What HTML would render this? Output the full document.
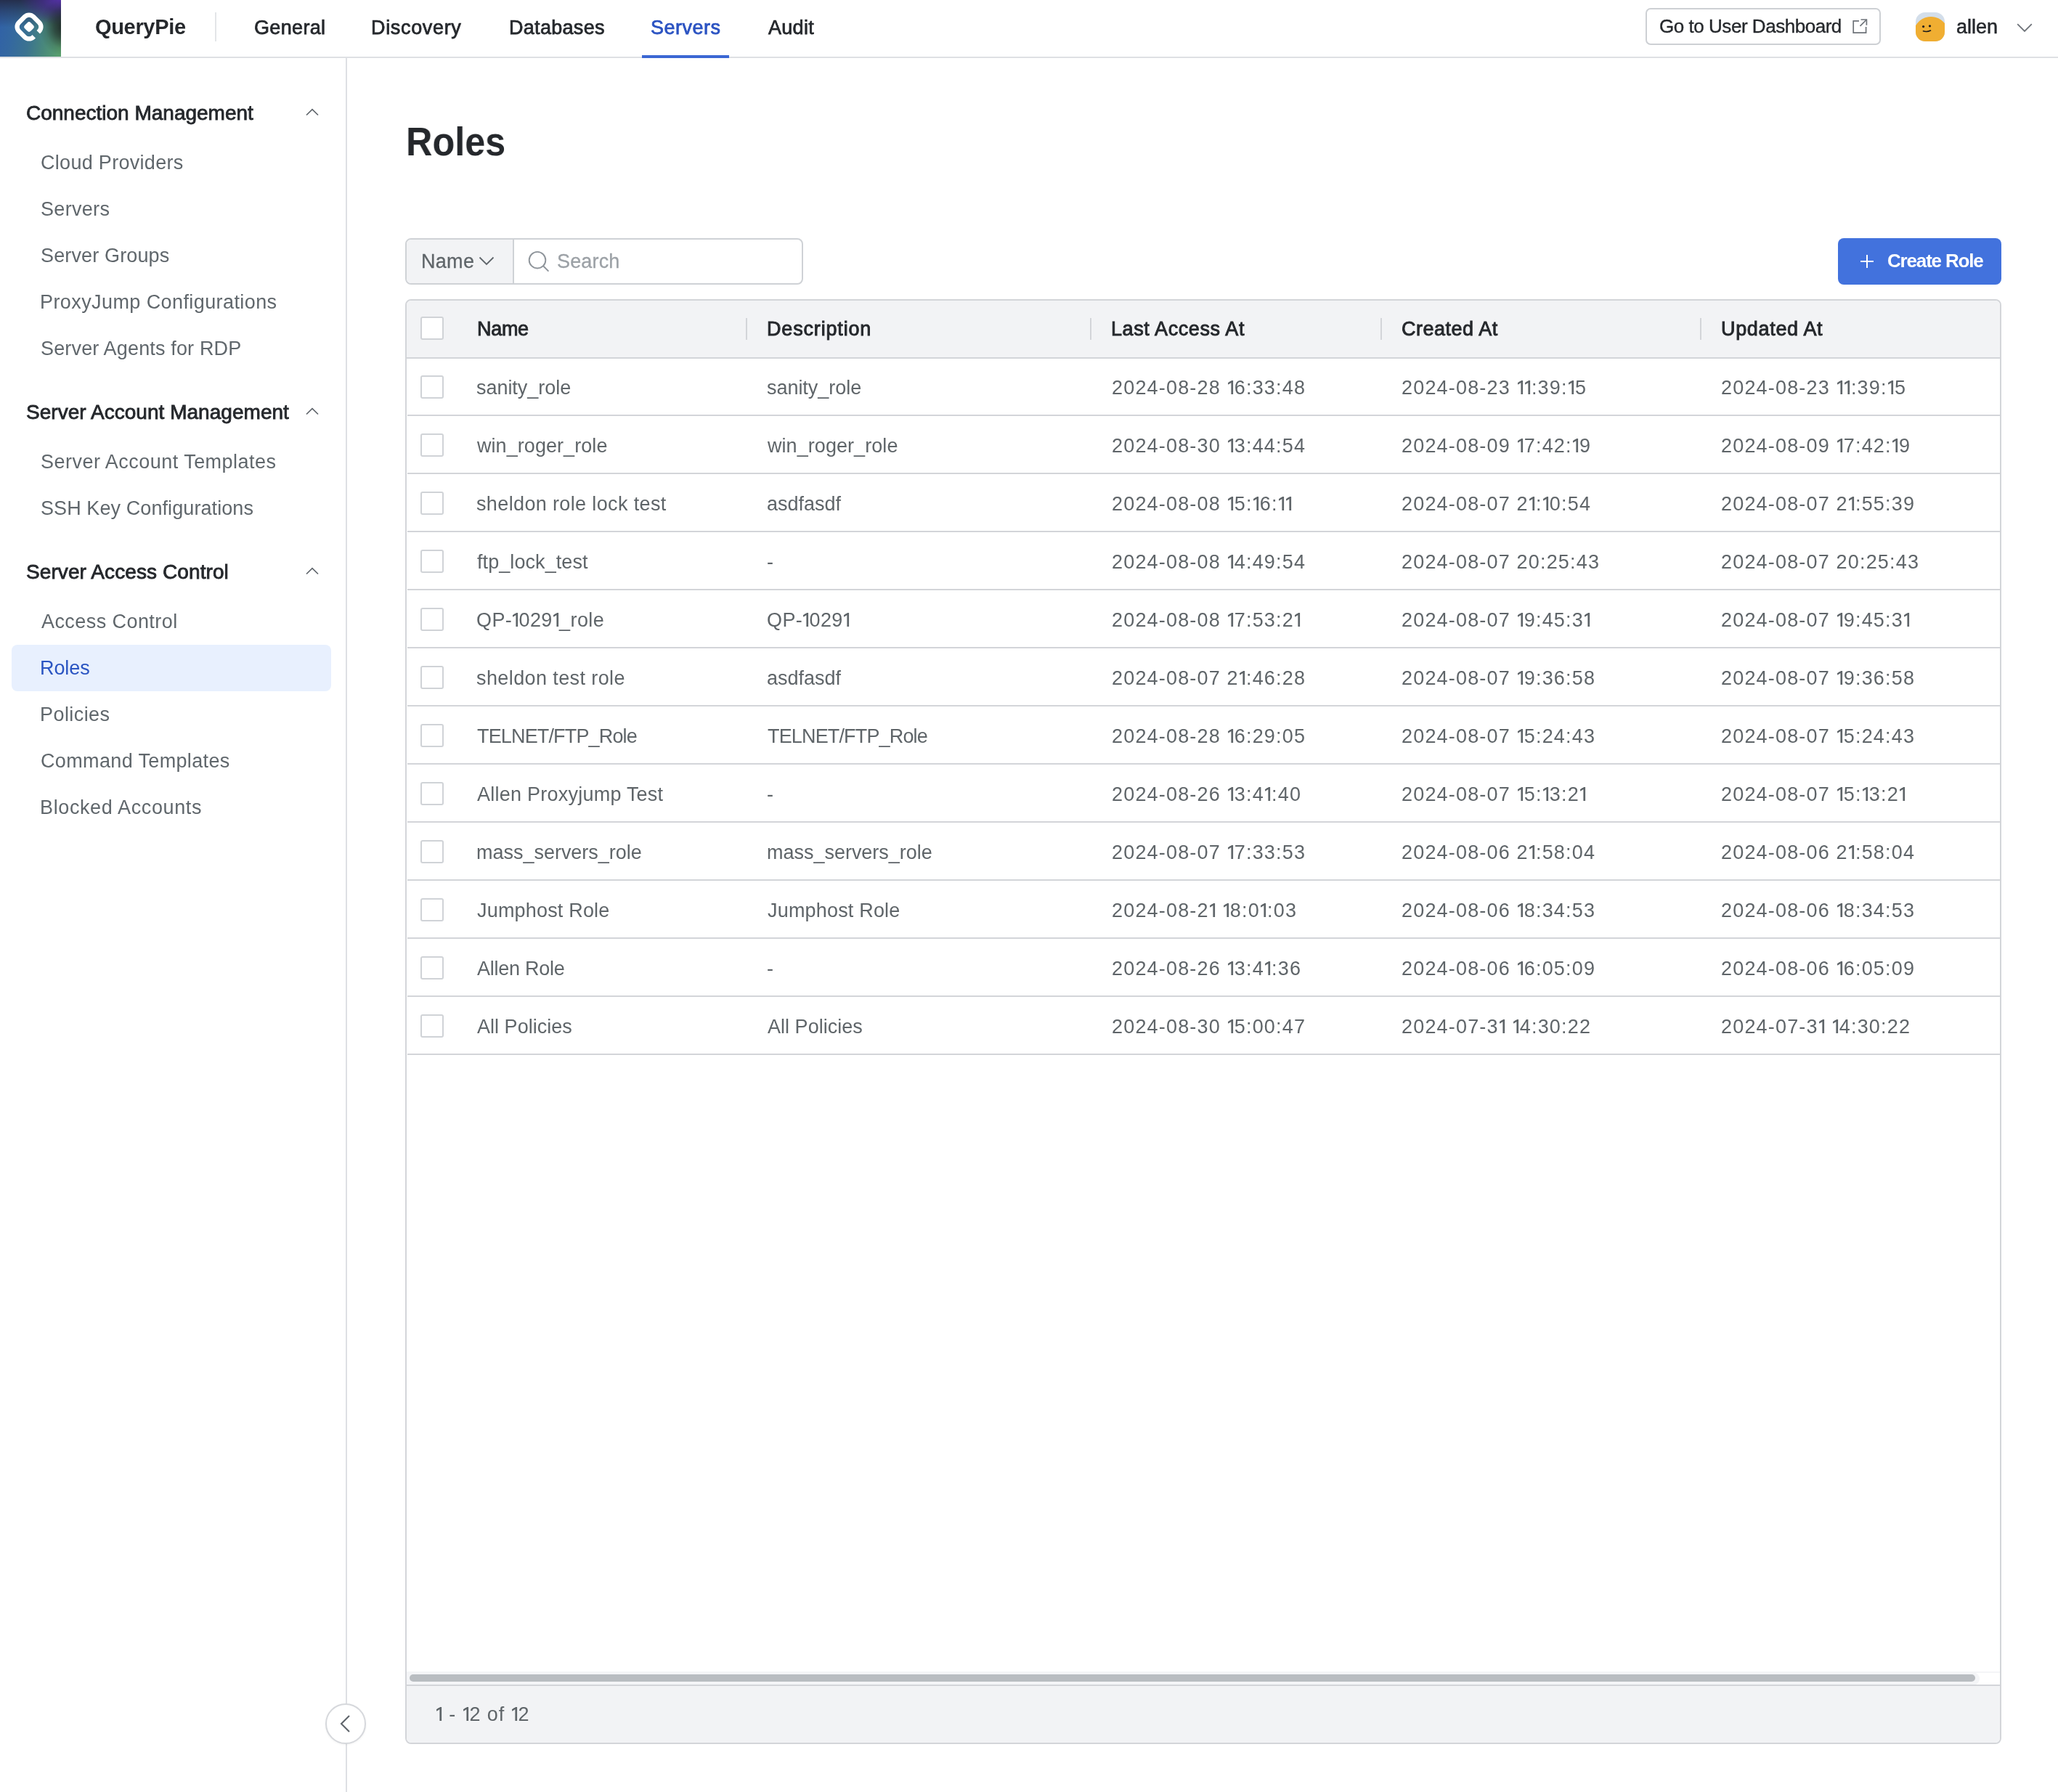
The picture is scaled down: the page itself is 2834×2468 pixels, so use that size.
<!DOCTYPE html><html><head><meta charset="utf-8"><title>Roles</title><style>
*{margin:0;padding:0}
html,body{width:2834px;height:2468px;overflow:hidden;background:#fff;font-family:"Liberation Sans",sans-serif;position:relative}
.t{position:absolute;line-height:1;white-space:nowrap;will-change:transform}
.box{position:absolute}
.dark{color:#25282C}
.gray{color:#5F6569}
.ph{color:#9CA1A6}
.white{color:#fff}
.nav{color:#25282C}
.nav.active{color:#2B53C2}
.side{color:#60676C}
.side.active{color:#2B55C2}
@media (max-width:1500px){html{zoom:0.5}}
.cb{width:32px;height:32px;border:2px solid #D0D3D7;border-radius:3px;box-sizing:border-box;background:#fff}
#hdr{position:absolute;left:0;top:0;width:2834px;height:78px;border-bottom:2px solid #DEE0E4;background:#fff}
#logo{position:absolute;left:0;top:0;width:84px;height:78px;overflow:hidden;
background:
 radial-gradient(ellipse 34px 40px at 88px 37px, rgba(26,30,34,0.95) 0%, rgba(26,30,34,0.6) 40%, rgba(26,30,34,0.15) 75%, rgba(26,30,34,0) 100%),
 radial-gradient(ellipse 56px 34px at 84px 0px, rgba(86,50,170,1) 0%, rgba(70,44,140,0.75) 45%, rgba(60,40,110,0) 100%),
 linear-gradient(180deg, rgba(36,44,72,0.95) 0%, rgba(36,44,72,0.5) 20%, rgba(36,44,72,0) 48%),
 linear-gradient(100deg, #3060A8 0%, #3468A0 25%, #3B7390 50%, #4A8A7A 75%, #5AA26C 100%);}
</style></head><body>
<div id="hdr"></div>
<div id="logo"><svg width="84" height="78" viewBox="0 0 84 78">
<defs><mask id="qm" maskUnits="userSpaceOnUse" x="0" y="0" width="84" height="78"><rect x="0" y="0" width="84" height="78" fill="#fff"/>
<path d="M41.5 33 L80 71.5 L74 77.5 L35.5 39 Z" fill="#000"/></mask></defs>
<g mask="url(#qm)"><rect x="25.9" y="22.9" width="28.2" height="28.2" rx="8.5" fill="none" stroke="#fff" stroke-width="6.3" transform="rotate(45 40 37)"/></g>
<rect x="34.3" y="31.3" width="11.4" height="11.4" rx="3.2" fill="#fff" transform="rotate(45 40 37)"/>
</svg></div>
<div class="t dark" style="left:131.40px;top:23px;font-size:29px;letter-spacing:-0.329px;font-weight:700;">QueryPie</div>
<div class="box" style="left:296px;top:17px;width:2px;height:40px;background:#E3E5E8"></div>
<div class="t nav" style="left:350.30px;top:25px;font-size:27px;letter-spacing:0.333px;-webkit-text-stroke:0.75px currentColor;">General</div>
<div class="t nav" style="left:511.20px;top:25px;font-size:27px;letter-spacing:0.662px;-webkit-text-stroke:0.75px currentColor;">Discovery</div>
<div class="t nav" style="left:701.00px;top:25px;font-size:27px;letter-spacing:0.3px;-webkit-text-stroke:0.75px currentColor;">Databases</div>
<div class="t nav active" style="left:895.50px;top:25px;font-size:27px;letter-spacing:0.483px;-webkit-text-stroke:0.75px currentColor;">Servers</div>
<div class="t nav" style="left:1057.60px;top:25px;font-size:27px;letter-spacing:0.3px;-webkit-text-stroke:0.75px currentColor;">Audit</div>
<div class="box" style="left:884px;top:76px;width:120px;height:4px;background:#3B67D3"></div>
<div class="box" style="left:2266px;top:11px;width:324px;height:51px;border:2px solid #CDD0D4;border-radius:7px;box-sizing:border-box;background:#fff"></div>
<div class="t dark" style="left:2284.60px;top:23px;font-size:26px;letter-spacing:-0.463px;-webkit-text-stroke:0.35px currentColor;">Go to User Dashboard</div>
<svg class="box" style="left:2551px;top:26px" width="21" height="21" viewBox="0 0 21 21" fill="none" stroke="#6E7379" stroke-width="1.7"><path d="M9 2.8H1.2V19.2H18.6V11"/><path d="M11.5 1H19.4V8.8"/><path d="M19.4 1L10.5 9.9"/></svg>
<svg class="box" style="left:2638px;top:17px" width="40" height="40" viewBox="0 0 40 40">
<defs><clipPath id="av"><rect x="0" y="0" width="40" height="40" rx="13"/></clipPath></defs>
<g clip-path="url(#av)"><rect width="40" height="40" fill="#D3DEEA"/>
<ellipse cx="21" cy="30" rx="24" ry="24" fill="#F0AE32" transform="rotate(-8 21 30)"/>
<circle cx="10.6" cy="19.6" r="1.6" fill="#1b1b1b"/><circle cx="19.5" cy="18.8" r="1.6" fill="#1b1b1b"/>
<path d="M10.5 25.8 Q15.5 27.6 20.5 25" stroke="#1b1b1b" stroke-width="1.6" fill="none" stroke-linecap="round"/></g></svg>
<div class="t dark" style="left:2694.00px;top:24px;font-size:27px;letter-spacing:0.0px;-webkit-text-stroke:0.5px currentColor;">allen</div>
<svg class="box" style="left:2777px;top:32px" width="22" height="13" viewBox="0 0 22 13" fill="none" stroke="#6E7379" stroke-width="1.8"><path d="M1.2 1.2L11 11L20.8 1.2"/></svg>
<div class="box" style="left:476px;top:80px;width:2px;height:2388px;background:#DEE0E4"></div>
<div class="t dark" style="left:36.20px;top:142px;font-size:28px;letter-spacing:0.0px;-webkit-text-stroke:0.85px currentColor;">Connection Management</div>
<svg class="box" style="left:420px;top:148px" width="20" height="12" viewBox="0 0 20 12" fill="none" stroke="#60666C" stroke-width="1.7"><path d="M2 10.5L10 2.6L18 10.5"/></svg>
<div class="t side" style="left:55.80px;top:211px;font-size:27px;letter-spacing:0.3px;">Cloud Providers</div>
<div class="t side" style="left:55.80px;top:275px;font-size:27px;letter-spacing:0.317px;">Servers</div>
<div class="t side" style="left:55.80px;top:339px;font-size:27px;letter-spacing:0.142px;">Server Groups</div>
<div class="t side" style="left:54.80px;top:403px;font-size:27px;letter-spacing:0.409px;">ProxyJump Configurations</div>
<div class="t side" style="left:55.80px;top:467px;font-size:27px;letter-spacing:0.155px;">Server Agents for RDP</div>
<div class="t dark" style="left:36.20px;top:554px;font-size:28px;letter-spacing:0.033px;-webkit-text-stroke:0.85px currentColor;">Server Account Management</div>
<svg class="box" style="left:420px;top:560px" width="20" height="12" viewBox="0 0 20 12" fill="none" stroke="#60666C" stroke-width="1.7"><path d="M2 10.5L10 2.6L18 10.5"/></svg>
<div class="t side" style="left:55.80px;top:623px;font-size:27px;letter-spacing:0.47px;">Server Account Templates</div>
<div class="t side" style="left:55.80px;top:687px;font-size:27px;letter-spacing:0.086px;">SSH Key Configurations</div>
<div class="t dark" style="left:36.20px;top:774px;font-size:28px;letter-spacing:0.09px;-webkit-text-stroke:0.85px currentColor;">Server Access Control</div>
<svg class="box" style="left:420px;top:780px" width="20" height="12" viewBox="0 0 20 12" fill="none" stroke="#60666C" stroke-width="1.7"><path d="M2 10.5L10 2.6L18 10.5"/></svg>
<div class="t side" style="left:56.80px;top:843px;font-size:27px;letter-spacing:0.431px;">Access Control</div>
<div class="box" style="left:16px;top:888px;width:440px;height:64px;border-radius:8px;background:#E8F0FE"></div>
<div class="t side active" style="left:54.80px;top:907px;font-size:27px;letter-spacing:-0.075px;">Roles</div>
<div class="t side" style="left:54.80px;top:971px;font-size:27px;letter-spacing:0.429px;">Policies</div>
<div class="t side" style="left:55.80px;top:1035px;font-size:27px;letter-spacing:0.356px;">Command Templates</div>
<div class="t side" style="left:54.80px;top:1099px;font-size:27px;letter-spacing:0.62px;">Blocked Accounts</div>
<div class="box" style="left:448px;top:2346px;width:56px;height:56px;border-radius:50%;border:2px solid #D6D8DC;box-sizing:border-box;background:#fff;box-shadow:0 1px 3px rgba(0,0,0,0.06)"></div>
<svg class="box" style="left:466px;top:2361px" width="18" height="26" viewBox="0 0 18 26" fill="none" stroke="#5F656B" stroke-width="2.1"><path d="M15 2L4 13L15 24"/></svg>
<div class="t dark" style="left:559.00px;top:167px;font-size:56px;letter-spacing:0px;font-weight:700;transform:scaleX(0.9);transform-origin:0 0;">Roles</div>
<div class="box" style="left:558px;top:328px;width:548px;height:64px;border:2px solid #CFD2D6;border-radius:8px;box-sizing:border-box;background:#fff;overflow:hidden"><div style="position:absolute;left:0;top:0;width:146px;height:60px;background:#F2F3F5;border-right:2px solid #CFD2D6"></div></div>
<div class="t gray" style="left:579.70px;top:347px;font-size:27px;letter-spacing:0.3px;-webkit-text-stroke:0.3px currentColor;">Name</div>
<svg class="box" style="left:659px;top:352px" width="22" height="14" viewBox="0 0 22 14" fill="none" stroke="#5F656B" stroke-width="1.8"><path d="M1.5 2.5L11 12L20.5 2.5"/></svg>
<svg class="box" style="left:727px;top:345px" width="31" height="31" viewBox="0 0 31 31" fill="none" stroke="#8E949A" stroke-width="1.9"><circle cx="13" cy="13.2" r="11.3"/><path d="M20.8 21L28.4 28.6"/></svg>
<div class="t ph" style="left:766.60px;top:347px;font-size:27px;letter-spacing:0.15px;-webkit-text-stroke:0.3px currentColor;">Search</div>
<div class="box" style="left:2531px;top:328px;width:225px;height:64px;border-radius:8px;background:#4272DD"></div>
<svg class="box" style="left:2561px;top:350px" width="20" height="20" viewBox="0 0 20 20" fill="none" stroke="#fff" stroke-width="2"><path d="M10 1V19M1 10H19"/></svg>
<div class="t white" style="left:2598.90px;top:346px;font-size:26px;letter-spacing:-1.17px;font-weight:700;">Create Role</div>
<div class="box" style="left:558px;top:412px;width:2198px;height:1990px;border:2px solid #D3D5D9;border-radius:8px;box-sizing:border-box;background:#fff;overflow:hidden">
<div style="position:absolute;left:0;top:0;width:100%;height:78px;background:#F2F3F5;border-bottom:2px solid #D3D5D9"></div>
<div style="position:absolute;left:0;top:1888px;width:100%;height:2px;background:#F4F5F7"></div>
<div style="position:absolute;left:0;top:1889px;width:2166px;height:18px;border-radius:0 9px 9px 0;background:#F4F5F7"></div>
<div style="position:absolute;left:4px;top:1892px;width:2156px;height:10px;border-radius:5px;background:#B9BDC1"></div>
<div style="position:absolute;left:0;top:1906px;width:100%;height:80px;background:#F2F3F5;border-top:2px solid #D3D5D9"></div>
</div>
<div class="box" style="left:1027px;top:438px;width:2px;height:30px;background:#D3D5D9"></div>
<div class="box" style="left:1501px;top:438px;width:2px;height:30px;background:#D3D5D9"></div>
<div class="box" style="left:1901px;top:438px;width:2px;height:30px;background:#D3D5D9"></div>
<div class="box" style="left:2341px;top:438px;width:2px;height:30px;background:#D3D5D9"></div>
<div class="box cb" style="left:579px;top:436px"></div>
<div class="t dark" style="left:656.80px;top:440px;font-size:27px;letter-spacing:-0.3px;-webkit-text-stroke:0.9px currentColor;">Name</div>
<div class="t dark" style="left:1056.00px;top:440px;font-size:27px;letter-spacing:0.83px;-webkit-text-stroke:0.9px currentColor;">Description</div>
<div class="t dark" style="left:1530.00px;top:440px;font-size:27px;letter-spacing:0.6px;-webkit-text-stroke:0.9px currentColor;">Last Access At</div>
<div class="t dark" style="left:1929.50px;top:440px;font-size:27px;letter-spacing:0.511px;-webkit-text-stroke:0.9px currentColor;">Created At</div>
<div class="t dark" style="left:2369.50px;top:440px;font-size:27px;letter-spacing:0.667px;-webkit-text-stroke:0.9px currentColor;">Updated At</div>
<div class="box" style="left:561px;top:571px;width:2193px;height:2px;background:#D3D5D9"></div>
<div class="box cb" style="left:579px;top:517px"></div>
<div class="t gray" style="left:656.00px;top:521px;font-size:27px;letter-spacing:-0.04px;">sanity_role</div>
<div class="t gray" style="left:1056.00px;top:521px;font-size:27px;letter-spacing:-0.04px;">sanity_role</div>
<div class="t gray" style="left:1530.70px;top:521px;font-size:27px;letter-spacing:1.18px;">2024-08-28 <svg width="9" height="19" viewBox="0 0 9 19" style="vertical-align:baseline;margin-right:1.18px"><path d="M5.4 0H8.1V19H5.4Z M5.6 0L5.6 2.9L1.3 5.7L0.9 3.3Z" fill="currentColor"/></svg>6:33:48</div>
<div class="t gray" style="left:1929.50px;top:521px;font-size:27px;letter-spacing:1.18px;">2024-08-23 <svg width="9" height="19" viewBox="0 0 9 19" style="vertical-align:baseline;margin-right:1.18px"><path d="M5.4 0H8.1V19H5.4Z M5.6 0L5.6 2.9L1.3 5.7L0.9 3.3Z" fill="currentColor"/></svg><svg width="9" height="19" viewBox="0 0 9 19" style="vertical-align:baseline;margin-right:1.18px"><path d="M5.4 0H8.1V19H5.4Z M5.6 0L5.6 2.9L1.3 5.7L0.9 3.3Z" fill="currentColor"/></svg>:39:<svg width="9" height="19" viewBox="0 0 9 19" style="vertical-align:baseline;margin-right:1.18px"><path d="M5.4 0H8.1V19H5.4Z M5.6 0L5.6 2.9L1.3 5.7L0.9 3.3Z" fill="currentColor"/></svg>5</div>
<div class="t gray" style="left:2369.50px;top:521px;font-size:27px;letter-spacing:1.18px;">2024-08-23 <svg width="9" height="19" viewBox="0 0 9 19" style="vertical-align:baseline;margin-right:1.18px"><path d="M5.4 0H8.1V19H5.4Z M5.6 0L5.6 2.9L1.3 5.7L0.9 3.3Z" fill="currentColor"/></svg><svg width="9" height="19" viewBox="0 0 9 19" style="vertical-align:baseline;margin-right:1.18px"><path d="M5.4 0H8.1V19H5.4Z M5.6 0L5.6 2.9L1.3 5.7L0.9 3.3Z" fill="currentColor"/></svg>:39:<svg width="9" height="19" viewBox="0 0 9 19" style="vertical-align:baseline;margin-right:1.18px"><path d="M5.4 0H8.1V19H5.4Z M5.6 0L5.6 2.9L1.3 5.7L0.9 3.3Z" fill="currentColor"/></svg>5</div>
<div class="box" style="left:561px;top:651px;width:2193px;height:2px;background:#D3D5D9"></div>
<div class="box cb" style="left:579px;top:597px"></div>
<div class="t gray" style="left:657.00px;top:601px;font-size:27px;letter-spacing:0.062px;">win_roger_role</div>
<div class="t gray" style="left:1057.00px;top:601px;font-size:27px;letter-spacing:0.062px;">win_roger_role</div>
<div class="t gray" style="left:1530.70px;top:601px;font-size:27px;letter-spacing:1.18px;">2024-08-30 <svg width="9" height="19" viewBox="0 0 9 19" style="vertical-align:baseline;margin-right:1.18px"><path d="M5.4 0H8.1V19H5.4Z M5.6 0L5.6 2.9L1.3 5.7L0.9 3.3Z" fill="currentColor"/></svg>3:44:54</div>
<div class="t gray" style="left:1929.50px;top:601px;font-size:27px;letter-spacing:1.18px;">2024-08-09 <svg width="9" height="19" viewBox="0 0 9 19" style="vertical-align:baseline;margin-right:1.18px"><path d="M5.4 0H8.1V19H5.4Z M5.6 0L5.6 2.9L1.3 5.7L0.9 3.3Z" fill="currentColor"/></svg>7:42:<svg width="9" height="19" viewBox="0 0 9 19" style="vertical-align:baseline;margin-right:1.18px"><path d="M5.4 0H8.1V19H5.4Z M5.6 0L5.6 2.9L1.3 5.7L0.9 3.3Z" fill="currentColor"/></svg>9</div>
<div class="t gray" style="left:2369.50px;top:601px;font-size:27px;letter-spacing:1.18px;">2024-08-09 <svg width="9" height="19" viewBox="0 0 9 19" style="vertical-align:baseline;margin-right:1.18px"><path d="M5.4 0H8.1V19H5.4Z M5.6 0L5.6 2.9L1.3 5.7L0.9 3.3Z" fill="currentColor"/></svg>7:42:<svg width="9" height="19" viewBox="0 0 9 19" style="vertical-align:baseline;margin-right:1.18px"><path d="M5.4 0H8.1V19H5.4Z M5.6 0L5.6 2.9L1.3 5.7L0.9 3.3Z" fill="currentColor"/></svg>9</div>
<div class="box" style="left:561px;top:731px;width:2193px;height:2px;background:#D3D5D9"></div>
<div class="box cb" style="left:579px;top:677px"></div>
<div class="t gray" style="left:656.00px;top:681px;font-size:27px;letter-spacing:0.367px;">sheldon role lock test</div>
<div class="t gray" style="left:1056.00px;top:681px;font-size:27px;letter-spacing:0px;">asdfasdf</div>
<div class="t gray" style="left:1530.70px;top:681px;font-size:27px;letter-spacing:1.18px;">2024-08-08 <svg width="9" height="19" viewBox="0 0 9 19" style="vertical-align:baseline;margin-right:1.18px"><path d="M5.4 0H8.1V19H5.4Z M5.6 0L5.6 2.9L1.3 5.7L0.9 3.3Z" fill="currentColor"/></svg>5:<svg width="9" height="19" viewBox="0 0 9 19" style="vertical-align:baseline;margin-right:1.18px"><path d="M5.4 0H8.1V19H5.4Z M5.6 0L5.6 2.9L1.3 5.7L0.9 3.3Z" fill="currentColor"/></svg>6:<svg width="9" height="19" viewBox="0 0 9 19" style="vertical-align:baseline;margin-right:1.18px"><path d="M5.4 0H8.1V19H5.4Z M5.6 0L5.6 2.9L1.3 5.7L0.9 3.3Z" fill="currentColor"/></svg><svg width="9" height="19" viewBox="0 0 9 19" style="vertical-align:baseline;margin-right:1.18px"><path d="M5.4 0H8.1V19H5.4Z M5.6 0L5.6 2.9L1.3 5.7L0.9 3.3Z" fill="currentColor"/></svg></div>
<div class="t gray" style="left:1929.50px;top:681px;font-size:27px;letter-spacing:1.18px;">2024-08-07 2<svg width="9" height="19" viewBox="0 0 9 19" style="vertical-align:baseline;margin-right:1.18px"><path d="M5.4 0H8.1V19H5.4Z M5.6 0L5.6 2.9L1.3 5.7L0.9 3.3Z" fill="currentColor"/></svg>:<svg width="9" height="19" viewBox="0 0 9 19" style="vertical-align:baseline;margin-right:1.18px"><path d="M5.4 0H8.1V19H5.4Z M5.6 0L5.6 2.9L1.3 5.7L0.9 3.3Z" fill="currentColor"/></svg>0:54</div>
<div class="t gray" style="left:2369.50px;top:681px;font-size:27px;letter-spacing:1.18px;">2024-08-07 2<svg width="9" height="19" viewBox="0 0 9 19" style="vertical-align:baseline;margin-right:1.18px"><path d="M5.4 0H8.1V19H5.4Z M5.6 0L5.6 2.9L1.3 5.7L0.9 3.3Z" fill="currentColor"/></svg>:55:39</div>
<div class="box" style="left:561px;top:811px;width:2193px;height:2px;background:#D3D5D9"></div>
<div class="box cb" style="left:579px;top:757px"></div>
<div class="t gray" style="left:657.00px;top:761px;font-size:27px;letter-spacing:0.075px;">ftp_lock_test</div>
<div class="t gray" style="left:1056.00px;top:761px;font-size:27px;letter-spacing:0px;">-</div>
<div class="t gray" style="left:1530.70px;top:761px;font-size:27px;letter-spacing:1.18px;">2024-08-08 <svg width="9" height="19" viewBox="0 0 9 19" style="vertical-align:baseline;margin-right:1.18px"><path d="M5.4 0H8.1V19H5.4Z M5.6 0L5.6 2.9L1.3 5.7L0.9 3.3Z" fill="currentColor"/></svg>4:49:54</div>
<div class="t gray" style="left:1929.50px;top:761px;font-size:27px;letter-spacing:1.18px;">2024-08-07 20:25:43</div>
<div class="t gray" style="left:2369.50px;top:761px;font-size:27px;letter-spacing:1.18px;">2024-08-07 20:25:43</div>
<div class="box" style="left:561px;top:891px;width:2193px;height:2px;background:#D3D5D9"></div>
<div class="box cb" style="left:579px;top:837px"></div>
<div class="t gray" style="left:656.00px;top:841px;font-size:27px;letter-spacing:0.38px;">QP-<svg width="9" height="19" viewBox="0 0 9 19" style="vertical-align:baseline;margin-right:0.38px"><path d="M5.4 0H8.1V19H5.4Z M5.6 0L5.6 2.9L1.3 5.7L0.9 3.3Z" fill="currentColor"/></svg>029<svg width="9" height="19" viewBox="0 0 9 19" style="vertical-align:baseline;margin-right:0.38px"><path d="M5.4 0H8.1V19H5.4Z M5.6 0L5.6 2.9L1.3 5.7L0.9 3.3Z" fill="currentColor"/></svg>_role</div>
<div class="t gray" style="left:1056.00px;top:841px;font-size:27px;letter-spacing:0.38px;">QP-<svg width="9" height="19" viewBox="0 0 9 19" style="vertical-align:baseline;margin-right:0.38px"><path d="M5.4 0H8.1V19H5.4Z M5.6 0L5.6 2.9L1.3 5.7L0.9 3.3Z" fill="currentColor"/></svg>029<svg width="9" height="19" viewBox="0 0 9 19" style="vertical-align:baseline;margin-right:0.38px"><path d="M5.4 0H8.1V19H5.4Z M5.6 0L5.6 2.9L1.3 5.7L0.9 3.3Z" fill="currentColor"/></svg></div>
<div class="t gray" style="left:1530.70px;top:841px;font-size:27px;letter-spacing:1.18px;">2024-08-08 <svg width="9" height="19" viewBox="0 0 9 19" style="vertical-align:baseline;margin-right:1.18px"><path d="M5.4 0H8.1V19H5.4Z M5.6 0L5.6 2.9L1.3 5.7L0.9 3.3Z" fill="currentColor"/></svg>7:53:2<svg width="9" height="19" viewBox="0 0 9 19" style="vertical-align:baseline;margin-right:1.18px"><path d="M5.4 0H8.1V19H5.4Z M5.6 0L5.6 2.9L1.3 5.7L0.9 3.3Z" fill="currentColor"/></svg></div>
<div class="t gray" style="left:1929.50px;top:841px;font-size:27px;letter-spacing:1.18px;">2024-08-07 <svg width="9" height="19" viewBox="0 0 9 19" style="vertical-align:baseline;margin-right:1.18px"><path d="M5.4 0H8.1V19H5.4Z M5.6 0L5.6 2.9L1.3 5.7L0.9 3.3Z" fill="currentColor"/></svg>9:45:3<svg width="9" height="19" viewBox="0 0 9 19" style="vertical-align:baseline;margin-right:1.18px"><path d="M5.4 0H8.1V19H5.4Z M5.6 0L5.6 2.9L1.3 5.7L0.9 3.3Z" fill="currentColor"/></svg></div>
<div class="t gray" style="left:2369.50px;top:841px;font-size:27px;letter-spacing:1.18px;">2024-08-07 <svg width="9" height="19" viewBox="0 0 9 19" style="vertical-align:baseline;margin-right:1.18px"><path d="M5.4 0H8.1V19H5.4Z M5.6 0L5.6 2.9L1.3 5.7L0.9 3.3Z" fill="currentColor"/></svg>9:45:3<svg width="9" height="19" viewBox="0 0 9 19" style="vertical-align:baseline;margin-right:1.18px"><path d="M5.4 0H8.1V19H5.4Z M5.6 0L5.6 2.9L1.3 5.7L0.9 3.3Z" fill="currentColor"/></svg></div>
<div class="box" style="left:561px;top:971px;width:2193px;height:2px;background:#D3D5D9"></div>
<div class="box cb" style="left:579px;top:917px"></div>
<div class="t gray" style="left:656.00px;top:921px;font-size:27px;letter-spacing:0.4px;">sheldon test role</div>
<div class="t gray" style="left:1056.00px;top:921px;font-size:27px;letter-spacing:0px;">asdfasdf</div>
<div class="t gray" style="left:1530.70px;top:921px;font-size:27px;letter-spacing:1.18px;">2024-08-07 2<svg width="9" height="19" viewBox="0 0 9 19" style="vertical-align:baseline;margin-right:1.18px"><path d="M5.4 0H8.1V19H5.4Z M5.6 0L5.6 2.9L1.3 5.7L0.9 3.3Z" fill="currentColor"/></svg>:46:28</div>
<div class="t gray" style="left:1929.50px;top:921px;font-size:27px;letter-spacing:1.18px;">2024-08-07 <svg width="9" height="19" viewBox="0 0 9 19" style="vertical-align:baseline;margin-right:1.18px"><path d="M5.4 0H8.1V19H5.4Z M5.6 0L5.6 2.9L1.3 5.7L0.9 3.3Z" fill="currentColor"/></svg>9:36:58</div>
<div class="t gray" style="left:2369.50px;top:921px;font-size:27px;letter-spacing:1.18px;">2024-08-07 <svg width="9" height="19" viewBox="0 0 9 19" style="vertical-align:baseline;margin-right:1.18px"><path d="M5.4 0H8.1V19H5.4Z M5.6 0L5.6 2.9L1.3 5.7L0.9 3.3Z" fill="currentColor"/></svg>9:36:58</div>
<div class="box" style="left:561px;top:1051px;width:2193px;height:2px;background:#D3D5D9"></div>
<div class="box cb" style="left:579px;top:997px"></div>
<div class="t gray" style="left:657.00px;top:1001px;font-size:27px;letter-spacing:-0.843px;">TELNET/FTP_Role</div>
<div class="t gray" style="left:1057.00px;top:1001px;font-size:27px;letter-spacing:-0.843px;">TELNET/FTP_Role</div>
<div class="t gray" style="left:1530.70px;top:1001px;font-size:27px;letter-spacing:1.18px;">2024-08-28 <svg width="9" height="19" viewBox="0 0 9 19" style="vertical-align:baseline;margin-right:1.18px"><path d="M5.4 0H8.1V19H5.4Z M5.6 0L5.6 2.9L1.3 5.7L0.9 3.3Z" fill="currentColor"/></svg>6:29:05</div>
<div class="t gray" style="left:1929.50px;top:1001px;font-size:27px;letter-spacing:1.18px;">2024-08-07 <svg width="9" height="19" viewBox="0 0 9 19" style="vertical-align:baseline;margin-right:1.18px"><path d="M5.4 0H8.1V19H5.4Z M5.6 0L5.6 2.9L1.3 5.7L0.9 3.3Z" fill="currentColor"/></svg>5:24:43</div>
<div class="t gray" style="left:2369.50px;top:1001px;font-size:27px;letter-spacing:1.18px;">2024-08-07 <svg width="9" height="19" viewBox="0 0 9 19" style="vertical-align:baseline;margin-right:1.18px"><path d="M5.4 0H8.1V19H5.4Z M5.6 0L5.6 2.9L1.3 5.7L0.9 3.3Z" fill="currentColor"/></svg>5:24:43</div>
<div class="box" style="left:561px;top:1131px;width:2193px;height:2px;background:#D3D5D9"></div>
<div class="box cb" style="left:579px;top:1077px"></div>
<div class="t gray" style="left:657.00px;top:1081px;font-size:27px;letter-spacing:0.237px;">Allen Proxyjump Test</div>
<div class="t gray" style="left:1056.00px;top:1081px;font-size:27px;letter-spacing:0px;">-</div>
<div class="t gray" style="left:1530.70px;top:1081px;font-size:27px;letter-spacing:1.18px;">2024-08-26 <svg width="9" height="19" viewBox="0 0 9 19" style="vertical-align:baseline;margin-right:1.18px"><path d="M5.4 0H8.1V19H5.4Z M5.6 0L5.6 2.9L1.3 5.7L0.9 3.3Z" fill="currentColor"/></svg>3:4<svg width="9" height="19" viewBox="0 0 9 19" style="vertical-align:baseline;margin-right:1.18px"><path d="M5.4 0H8.1V19H5.4Z M5.6 0L5.6 2.9L1.3 5.7L0.9 3.3Z" fill="currentColor"/></svg>:40</div>
<div class="t gray" style="left:1929.50px;top:1081px;font-size:27px;letter-spacing:1.18px;">2024-08-07 <svg width="9" height="19" viewBox="0 0 9 19" style="vertical-align:baseline;margin-right:1.18px"><path d="M5.4 0H8.1V19H5.4Z M5.6 0L5.6 2.9L1.3 5.7L0.9 3.3Z" fill="currentColor"/></svg>5:<svg width="9" height="19" viewBox="0 0 9 19" style="vertical-align:baseline;margin-right:1.18px"><path d="M5.4 0H8.1V19H5.4Z M5.6 0L5.6 2.9L1.3 5.7L0.9 3.3Z" fill="currentColor"/></svg>3:2<svg width="9" height="19" viewBox="0 0 9 19" style="vertical-align:baseline;margin-right:1.18px"><path d="M5.4 0H8.1V19H5.4Z M5.6 0L5.6 2.9L1.3 5.7L0.9 3.3Z" fill="currentColor"/></svg></div>
<div class="t gray" style="left:2369.50px;top:1081px;font-size:27px;letter-spacing:1.18px;">2024-08-07 <svg width="9" height="19" viewBox="0 0 9 19" style="vertical-align:baseline;margin-right:1.18px"><path d="M5.4 0H8.1V19H5.4Z M5.6 0L5.6 2.9L1.3 5.7L0.9 3.3Z" fill="currentColor"/></svg>5:<svg width="9" height="19" viewBox="0 0 9 19" style="vertical-align:baseline;margin-right:1.18px"><path d="M5.4 0H8.1V19H5.4Z M5.6 0L5.6 2.9L1.3 5.7L0.9 3.3Z" fill="currentColor"/></svg>3:2<svg width="9" height="19" viewBox="0 0 9 19" style="vertical-align:baseline;margin-right:1.18px"><path d="M5.4 0H8.1V19H5.4Z M5.6 0L5.6 2.9L1.3 5.7L0.9 3.3Z" fill="currentColor"/></svg></div>
<div class="box" style="left:561px;top:1211px;width:2193px;height:2px;background:#D3D5D9"></div>
<div class="box cb" style="left:579px;top:1157px"></div>
<div class="t gray" style="left:656.00px;top:1161px;font-size:27px;letter-spacing:-0.019px;">mass_servers_role</div>
<div class="t gray" style="left:1056.00px;top:1161px;font-size:27px;letter-spacing:-0.019px;">mass_servers_role</div>
<div class="t gray" style="left:1530.70px;top:1161px;font-size:27px;letter-spacing:1.18px;">2024-08-07 <svg width="9" height="19" viewBox="0 0 9 19" style="vertical-align:baseline;margin-right:1.18px"><path d="M5.4 0H8.1V19H5.4Z M5.6 0L5.6 2.9L1.3 5.7L0.9 3.3Z" fill="currentColor"/></svg>7:33:53</div>
<div class="t gray" style="left:1929.50px;top:1161px;font-size:27px;letter-spacing:1.18px;">2024-08-06 2<svg width="9" height="19" viewBox="0 0 9 19" style="vertical-align:baseline;margin-right:1.18px"><path d="M5.4 0H8.1V19H5.4Z M5.6 0L5.6 2.9L1.3 5.7L0.9 3.3Z" fill="currentColor"/></svg>:58:04</div>
<div class="t gray" style="left:2369.50px;top:1161px;font-size:27px;letter-spacing:1.18px;">2024-08-06 2<svg width="9" height="19" viewBox="0 0 9 19" style="vertical-align:baseline;margin-right:1.18px"><path d="M5.4 0H8.1V19H5.4Z M5.6 0L5.6 2.9L1.3 5.7L0.9 3.3Z" fill="currentColor"/></svg>:58:04</div>
<div class="box" style="left:561px;top:1291px;width:2193px;height:2px;background:#D3D5D9"></div>
<div class="box cb" style="left:579px;top:1237px"></div>
<div class="t gray" style="left:657.00px;top:1241px;font-size:27px;letter-spacing:0.183px;">Jumphost Role</div>
<div class="t gray" style="left:1057.00px;top:1241px;font-size:27px;letter-spacing:0.183px;">Jumphost Role</div>
<div class="t gray" style="left:1530.70px;top:1241px;font-size:27px;letter-spacing:1.18px;">2024-08-2<svg width="9" height="19" viewBox="0 0 9 19" style="vertical-align:baseline;margin-right:1.18px"><path d="M5.4 0H8.1V19H5.4Z M5.6 0L5.6 2.9L1.3 5.7L0.9 3.3Z" fill="currentColor"/></svg> <svg width="9" height="19" viewBox="0 0 9 19" style="vertical-align:baseline;margin-right:1.18px"><path d="M5.4 0H8.1V19H5.4Z M5.6 0L5.6 2.9L1.3 5.7L0.9 3.3Z" fill="currentColor"/></svg>8:0<svg width="9" height="19" viewBox="0 0 9 19" style="vertical-align:baseline;margin-right:1.18px"><path d="M5.4 0H8.1V19H5.4Z M5.6 0L5.6 2.9L1.3 5.7L0.9 3.3Z" fill="currentColor"/></svg>:03</div>
<div class="t gray" style="left:1929.50px;top:1241px;font-size:27px;letter-spacing:1.18px;">2024-08-06 <svg width="9" height="19" viewBox="0 0 9 19" style="vertical-align:baseline;margin-right:1.18px"><path d="M5.4 0H8.1V19H5.4Z M5.6 0L5.6 2.9L1.3 5.7L0.9 3.3Z" fill="currentColor"/></svg>8:34:53</div>
<div class="t gray" style="left:2369.50px;top:1241px;font-size:27px;letter-spacing:1.18px;">2024-08-06 <svg width="9" height="19" viewBox="0 0 9 19" style="vertical-align:baseline;margin-right:1.18px"><path d="M5.4 0H8.1V19H5.4Z M5.6 0L5.6 2.9L1.3 5.7L0.9 3.3Z" fill="currentColor"/></svg>8:34:53</div>
<div class="box" style="left:561px;top:1371px;width:2193px;height:2px;background:#D3D5D9"></div>
<div class="box cb" style="left:579px;top:1317px"></div>
<div class="t gray" style="left:657.00px;top:1321px;font-size:27px;letter-spacing:-0.256px;">Allen Role</div>
<div class="t gray" style="left:1056.00px;top:1321px;font-size:27px;letter-spacing:0px;">-</div>
<div class="t gray" style="left:1530.70px;top:1321px;font-size:27px;letter-spacing:1.18px;">2024-08-26 <svg width="9" height="19" viewBox="0 0 9 19" style="vertical-align:baseline;margin-right:1.18px"><path d="M5.4 0H8.1V19H5.4Z M5.6 0L5.6 2.9L1.3 5.7L0.9 3.3Z" fill="currentColor"/></svg>3:4<svg width="9" height="19" viewBox="0 0 9 19" style="vertical-align:baseline;margin-right:1.18px"><path d="M5.4 0H8.1V19H5.4Z M5.6 0L5.6 2.9L1.3 5.7L0.9 3.3Z" fill="currentColor"/></svg>:36</div>
<div class="t gray" style="left:1929.50px;top:1321px;font-size:27px;letter-spacing:1.18px;">2024-08-06 <svg width="9" height="19" viewBox="0 0 9 19" style="vertical-align:baseline;margin-right:1.18px"><path d="M5.4 0H8.1V19H5.4Z M5.6 0L5.6 2.9L1.3 5.7L0.9 3.3Z" fill="currentColor"/></svg>6:05:09</div>
<div class="t gray" style="left:2369.50px;top:1321px;font-size:27px;letter-spacing:1.18px;">2024-08-06 <svg width="9" height="19" viewBox="0 0 9 19" style="vertical-align:baseline;margin-right:1.18px"><path d="M5.4 0H8.1V19H5.4Z M5.6 0L5.6 2.9L1.3 5.7L0.9 3.3Z" fill="currentColor"/></svg>6:05:09</div>
<div class="box" style="left:561px;top:1451px;width:2193px;height:2px;background:#D3D5D9"></div>
<div class="box cb" style="left:579px;top:1397px"></div>
<div class="t gray" style="left:657.00px;top:1401px;font-size:27px;letter-spacing:0.027px;">All Policies</div>
<div class="t gray" style="left:1057.00px;top:1401px;font-size:27px;letter-spacing:0.027px;">All Policies</div>
<div class="t gray" style="left:1530.70px;top:1401px;font-size:27px;letter-spacing:1.18px;">2024-08-30 <svg width="9" height="19" viewBox="0 0 9 19" style="vertical-align:baseline;margin-right:1.18px"><path d="M5.4 0H8.1V19H5.4Z M5.6 0L5.6 2.9L1.3 5.7L0.9 3.3Z" fill="currentColor"/></svg>5:00:47</div>
<div class="t gray" style="left:1929.50px;top:1401px;font-size:27px;letter-spacing:1.18px;">2024-07-3<svg width="9" height="19" viewBox="0 0 9 19" style="vertical-align:baseline;margin-right:1.18px"><path d="M5.4 0H8.1V19H5.4Z M5.6 0L5.6 2.9L1.3 5.7L0.9 3.3Z" fill="currentColor"/></svg> <svg width="9" height="19" viewBox="0 0 9 19" style="vertical-align:baseline;margin-right:1.18px"><path d="M5.4 0H8.1V19H5.4Z M5.6 0L5.6 2.9L1.3 5.7L0.9 3.3Z" fill="currentColor"/></svg>4:30:22</div>
<div class="t gray" style="left:2369.50px;top:1401px;font-size:27px;letter-spacing:1.18px;">2024-07-3<svg width="9" height="19" viewBox="0 0 9 19" style="vertical-align:baseline;margin-right:1.18px"><path d="M5.4 0H8.1V19H5.4Z M5.6 0L5.6 2.9L1.3 5.7L0.9 3.3Z" fill="currentColor"/></svg> <svg width="9" height="19" viewBox="0 0 9 19" style="vertical-align:baseline;margin-right:1.18px"><path d="M5.4 0H8.1V19H5.4Z M5.6 0L5.6 2.9L1.3 5.7L0.9 3.3Z" fill="currentColor"/></svg>4:30:22</div>
<div class="t gray" style="left:599.80px;top:2348px;font-size:27px;letter-spacing:0.9px;"><svg width="9" height="19" viewBox="0 0 9 19" style="vertical-align:baseline;margin-right:0.9px"><path d="M5.4 0H8.1V19H5.4Z M5.6 0L5.6 2.9L1.3 5.7L0.9 3.3Z" fill="currentColor"/></svg> - <svg width="9" height="19" viewBox="0 0 9 19" style="vertical-align:baseline;margin-right:0.9px"><path d="M5.4 0H8.1V19H5.4Z M5.6 0L5.6 2.9L1.3 5.7L0.9 3.3Z" fill="currentColor"/></svg>2 of <svg width="9" height="19" viewBox="0 0 9 19" style="vertical-align:baseline;margin-right:0.9px"><path d="M5.4 0H8.1V19H5.4Z M5.6 0L5.6 2.9L1.3 5.7L0.9 3.3Z" fill="currentColor"/></svg>2</div>
</body></html>
